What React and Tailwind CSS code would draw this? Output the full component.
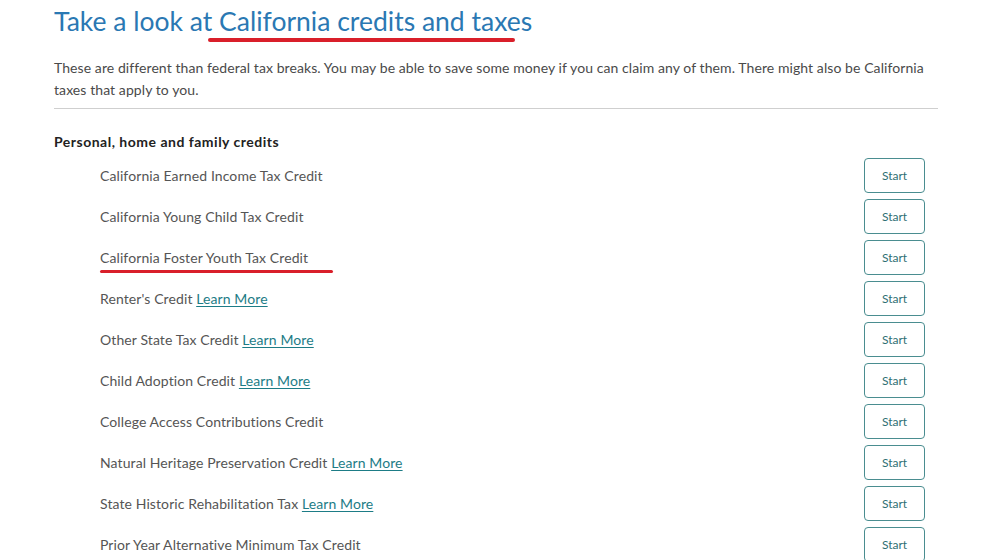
import React from 'react';

const credits = [
  { name: 'California Earned Income Tax Credit' },
  { name: 'California Young Child Tax Credit' },
  { name: 'California Foster Youth Tax Credit', marked: true },
  { name: "Renter's Credit", link: true },
  { name: 'Other State Tax Credit', link: true },
  { name: 'Child Adoption Credit', link: true },
  { name: 'College Access Contributions Credit' },
  { name: 'Natural Heritage Preservation Credit', link: true },
  { name: 'State Historic Rehabilitation Tax', link: true },
  { name: 'Prior Year Alternative Minimum Tax Credit' },
];

const App = () => {
  return (
    <div className="w-[999px] h-[560px] overflow-hidden bg-white font-['Lato','Open_Sans',sans-serif] pl-[54px] pr-[61px]">
      <div className="relative pt-[5px]">
        <h1 className="text-[26.5px] leading-[32px] text-[#2a78b3]">
          Take a look at California credits and taxes
        </h1>
        <div className="absolute left-[154px] top-[38px] w-[307px] h-[4px] rounded-full bg-[#d91f2a]" />
      </div>

      <p className="mt-[20px] text-[14px] tracking-[0.08px] leading-[22px] text-[#4a4a4a] pb-[7px] border-b border-[#cfcfcf]">
        These are different than federal tax breaks. You may be able to save some money if you can claim any of them. There might also be California taxes that apply to you.
      </p>

      <h2 className="mt-[23px] text-[14px] tracking-[0.5px] leading-[20px] font-bold text-[#222]">
        Personal, home and family credits
      </h2>

      <div className="mt-[3px]">
        {credits.map((c) => (
          <div key={c.name} className="relative h-[41px] flex items-center justify-between pl-[46px] pr-[13px]">
            <span className="text-[14px] tracking-[0.1px] text-[#555]">
              {c.name}
              {c.link && (
                <>
                  {' '}
                  <a href="#" className="text-[#1d7c86] underline underline-offset-2">Learn More</a>
                </>
              )}
            </span>
            {c.marked && (
              <div className="absolute left-[46px] top-[33px] w-[233px] h-[3px] rounded-full bg-[#d91f2a]" />
            )}
            <button className="w-[61px] h-[35px] rounded-[4px] border border-[#4a8d90] text-[12px] text-[#2f6f74]">
              Start
            </button>
          </div>
        ))}
      </div>
    </div>
  );
};

export default App;
